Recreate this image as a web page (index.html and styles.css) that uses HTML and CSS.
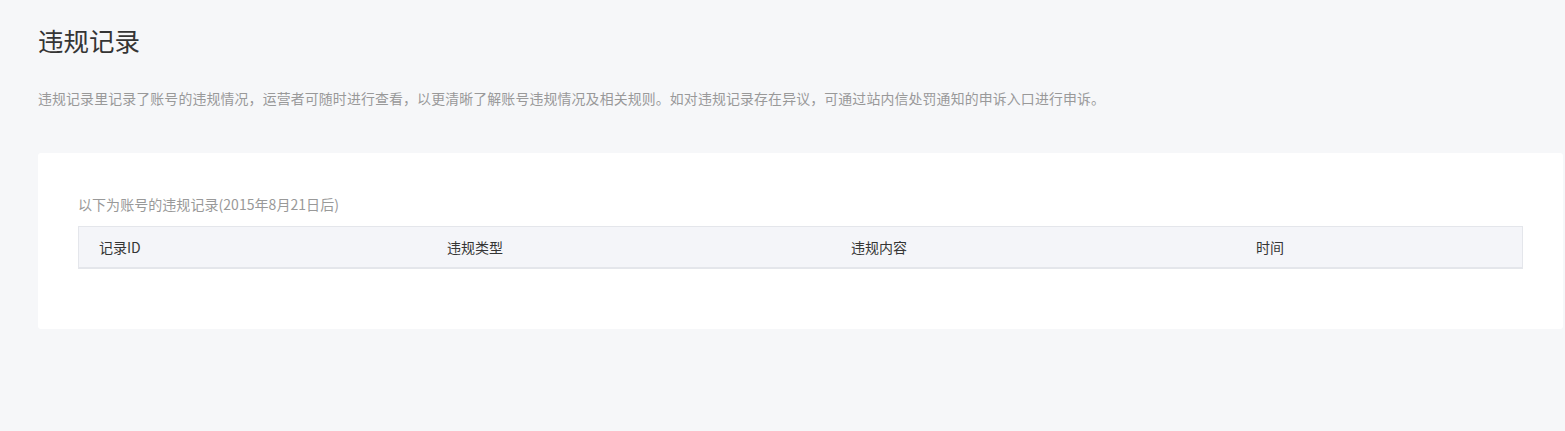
FILE: index.html
```html
<!DOCTYPE html>
<html lang="zh">
<head>
<meta charset="utf-8">
<link rel="stylesheet" href="styles.css">
</head>
<body>
<div class="page">
  <h1 class="title">违规记录</h1>
  <p class="desc">违规记录里记录了账号的违规情况，运营者可随时进行查看，以更清晰了解账号违规情况及相关规则。如对违规记录存在异议，可通过站内信处罚通知的申诉入口进行申诉。</p>
  <div class="card">
    <div class="subtitle">以下为账号的违规记录(2015年8月21日后)</div>
    <div class="table">
      <div class="thead">
        <div class="th">记录ID</div>
        <div class="th">违规类型</div>
        <div class="th">违规内容</div>
        <div class="th">时间</div>
      </div>
    </div>
  </div>
</div>
</body>
</html>
```
FILE: styles.css
```css
html, body {
  margin: 0;
  padding: 0;
  background: #f6f7f9;
}
body {
  font-family: "Noto Sans CJK SC", "Noto Sans", sans-serif;
  color: #353535;
}
.page {
  padding: 22px 2px 0 38px;
}
.title {
  margin: 0;
  font-size: 25.5px;
  font-weight: 400;
  line-height: 36px;
  color: #353535;
}
.desc {
  margin: 30px 0 0;
  font-size: 13.9px;
  letter-spacing: 0.15px;
  line-height: 20px;
  color: #999;
}
.card {
  margin-top: 45px;
  background: #fff;
  border-radius: 3px;
  padding: 41px 40px 60px 40px;
}
.subtitle {
  font-size: 14px;
  letter-spacing: 0.05px;
  line-height: 20px;
  color: #999;
  margin-bottom: 12px;
}
.table {
  border: 1px solid #e4e6eb;
  border-bottom: 2px solid #e4e6eb;
  background: #f4f5f9;
}
.thead {
  display: grid;
  grid-template-columns: 348px 404px 405px 1fr;
  height: 40px;
  align-items: center;
}
.th {
  padding-left: 20px;
  font-size: 14px;
  color: #353535;
}
```
